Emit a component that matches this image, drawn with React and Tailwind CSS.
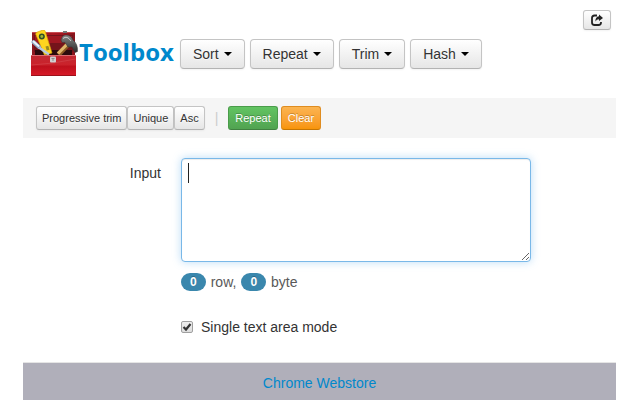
import React from "react";

const baseButton =
  "border border-[#c4c4c4] border-b-[#b3b3b3] bg-linear-to-b from-white to-[#e6e6e6] text-[#333] shadow-[inset_0_1px_0_rgba(255,255,255,.2),0_1px_2px_rgba(0,0,0,.05)] [text-shadow:0_1px_1px_rgba(255,255,255,.75)]";

function MenuButton({ children }) {
  return (
    <button
      type="button"
      aria-haspopup="menu"
      className={`${baseButton} flex h-[30px] items-center gap-[5px] rounded px-3 text-sm leading-5`}
    >
      {children}
      <span className="border-x-4 border-t-4 border-x-transparent border-t-black" />
    </button>
  );
}

function SmallButton({ children }) {
  return (
    <button type="button" className={`${baseButton} h-6 rounded-[3px] px-[5px] text-[11px] leading-5`}>
      {children}
    </button>
  );
}

function Badge({ children }) {
  return (
    <span className="rounded-[9px] bg-[#3a87ad] px-[9px] py-0.5 text-xs leading-[14px] font-bold text-white [text-shadow:0_-1px_0_rgba(0,0,0,.25)]">
      {children}
    </span>
  );
}

function ToolboxLogo() {
  return (
    <svg className="h-12 w-12 shrink-0" viewBox="1 2 48 48" aria-hidden="true">
      <defs>
        <linearGradient id="box" x1="0" y1="0" x2="0" y2="1">
          <stop offset="0" stopColor="#bf2a33" />
          <stop offset=".45" stopColor="#cb222b" />
          <stop offset=".55" stopColor="#be101c" />
          <stop offset="1" stopColor="#d91b29" />
        </linearGradient>
        <linearGradient id="lid" x1="0" y1="0" x2="1" y2="0">
          <stop offset="0" stopColor="#8c1820" />
          <stop offset=".5" stopColor="#ad1722" />
          <stop offset="1" stopColor="#86141c" />
        </linearGradient>
        <linearGradient id="head" x1="0" y1="0" x2="0" y2="1">
          <stop offset="0" stopColor="#888" />
          <stop offset="1" stopColor="#2a2a2a" />
        </linearGradient>
      </defs>
      <path d="M2 5Q2 4 3 4H43.500Q45 4 45 5V27H2Z" fill="url(#lid)" />
      <path d="M4 7H43V24H4Z" fill="#74141b" />
      <path d="M5 8H42V15H5Z" fill="#a01822" />
      <path d="M2 4.500H45" stroke="#c64b51" />
      <path d="M10 4h4M33 4h4" stroke="#777" strokeWidth="2" />
      <path d="M5 22H42V27.500H5Z" fill="#2b0b0d" />
      <path d="M5.800 6.500Q5.500 4.800 7 4.200L13 2Q14.700 1.700 15.200 3.300L22 25L14.500 27Z" fill="#ffd51f" stroke="#d6a409" strokeWidth=".7" />
      <circle cx="11.800" cy="8.500" r="3" fill="#315027" />
      <circle cx="11.800" cy="8.500" r="1.400" fill="#a3b632" />
      <path d="M15.500 18.500l2.800-.8 1.200 4-2.800.8Z" fill="#9a8a20" />
      <path d="M3.500 14L9 19" stroke="#91abc5" strokeWidth="4" strokeLinecap="round" />
      <path d="M3.500 13.500L8.500 18" stroke="#eef5fc" strokeWidth="1.800" strokeLinecap="round" />
      <path d="M9 19.500L19 26.500" stroke="#b7c8dc" strokeWidth="2.500" />
      <path d="M28.500 26.500L38.500 16" stroke="#8c5821" strokeWidth="5" />
      <path d="M28 25.500L37.800 15.500" stroke="#e1b66b" strokeWidth="3.200" />
      <path d="M31 12Q32 7 36 7Q41 7 43 12Q48 16 47.500 23.500L45 24.500L42 19L38 19L35 14.500L32 14.500Z" fill="url(#head)" stroke="#333" strokeWidth=".5" />
      <path d="M33 10.500Q37 7 41 13" fill="none" stroke="#ccc" />
      <path d="M1 27H46V48H1Z" fill="url(#box)" />
      <path d="M1 27.500H46" stroke="#db6a6f" />
      <path d="M1.500 37Q23 36 45.500 31" fill="none" stroke="#cf3941" />
      <rect x="20" y="28.500" width="6" height="6" rx="1" fill="#d0d0d0" />
      <path d="M21.500 30.500h3M23 31v2" stroke="#8d8d8d" />
      <path d="M1 47.500H46" stroke="#9c121b" />
    </svg>
  );
}

export default function App() {
  return (
    <div className="min-h-screen overflow-hidden bg-white pr-6 pl-[23px] font-['Liberation_Sans',Arial,sans-serif] text-sm leading-5 text-[#333]">
      <div className="flex justify-end pt-2.5 pr-[5px]">
        <button type="button" aria-label="Open in a new window" className={`${baseButton} flex h-5 w-7 items-center justify-center rounded-[3px]`}>
          <svg className="h-3 w-3" viewBox="0 0 12 12" aria-hidden="true">
            <path d="M6 1.500H3.500Q1 1.500 1 4V8.500Q1 11 3.500 11H7.500Q10 11 10 8.500V8" fill="none" stroke="#222" strokeWidth="1.800" />
            <path d="M8 .5L12 4L8 7V5.200Q5.500 5.200 4.500 7.500Q4 3 8 2.300Z" fill="#222" />
          </svg>
        </button>
      </div>

      <header className="flex items-center pl-2">
        <ToolboxLogo />
        <h1 className="mr-1.5 -mt-1 font-['Open_Sans','Noto_Sans',sans-serif] text-2xl leading-10 font-bold text-[#0088cc] [font-kerning:none]">
          <a href="#">Toolbox</a>
        </h1>
        <nav className="flex gap-[5px]">
          <MenuButton>Sort</MenuButton>
          <MenuButton>Repeat</MenuButton>
          <MenuButton>Trim</MenuButton>
          <MenuButton>Hash</MenuButton>
        </nav>
      </header>

      <div className="mt-5 flex h-10 items-center bg-[#f5f5f5] px-[13px]">
        <SmallButton>Progressive trim</SmallButton>
        <SmallButton>Unique</SmallButton>
        <SmallButton>Asc</SmallButton>
        <span className="mx-2.5 text-[#ccc]">|</span>
        <div className="flex gap-[3px]">
          <button type="button" className="h-6 rounded-[3px] border border-[#4a9c4a] border-b-[#408140] bg-linear-to-b from-[#62c462] to-[#51a351] px-1.5 text-[11px] leading-5 text-white [text-shadow:0_-1px_0_rgba(0,0,0,.25)]">
            Repeat
          </button>
          <button type="button" className="h-6 rounded-[3px] border border-[#df8c20] border-b-[#c67605] bg-linear-to-b from-[#fbb450] to-[#f89406] px-1.5 text-[11px] leading-5 text-white [text-shadow:0_-1px_0_rgba(0,0,0,.25)]">
            Clear
          </button>
        </div>
      </div>

      <form className="mt-5 flex gap-5">
        <label htmlFor="input" className="w-[138px] shrink-0 pt-[5px] text-right">
          Input
        </label>
        <div>
          <div className="relative">
            <textarea
              id="input"
              className="block h-[104px] w-[350px] rounded border border-[#79b8e8] bg-white px-1.5 py-1 caret-transparent shadow-[inset_0_1px_1px_rgba(0,0,0,.075),0_0_8px_rgba(82,168,236,.4)] outline-none"
            />
            <span className="pointer-events-none absolute top-[5px] left-[7px] h-5 w-px bg-[#222]" />
          </div>
          <p className="mt-2.5 flex items-center gap-[5px] text-[#595959]">
            <Badge>0</Badge>
            <span>row,</span>
            <Badge>0</Badge>
            <span>byte</span>
          </p>
          <label className="mt-[25px] flex items-center gap-2">
            <span className="relative flex">
              <input
                type="checkbox"
                defaultChecked
                className="peer h-3 w-3 appearance-none rounded-xs border border-[#a0a0a0] bg-linear-to-b from-[#eee] to-[#ddd]"
              />
              <svg className="pointer-events-none absolute inset-0 hidden h-3 w-3 peer-checked:block" viewBox="0 0 12 12" aria-hidden="true">
                <path d="M2.500 6L5 8.500L9.500 3" fill="none" stroke="#333" strokeWidth="2.200" />
              </svg>
            </span>
            Single text area mode
          </label>
        </div>
      </form>

      <footer className="mt-[25px] border-t border-[#e5e5e5] bg-[#b0afba] py-2.5 text-center">
        <a href="#" className="text-[#0088cc]">
          Chrome Webstore
        </a>
      </footer>
    </div>
  );
}
